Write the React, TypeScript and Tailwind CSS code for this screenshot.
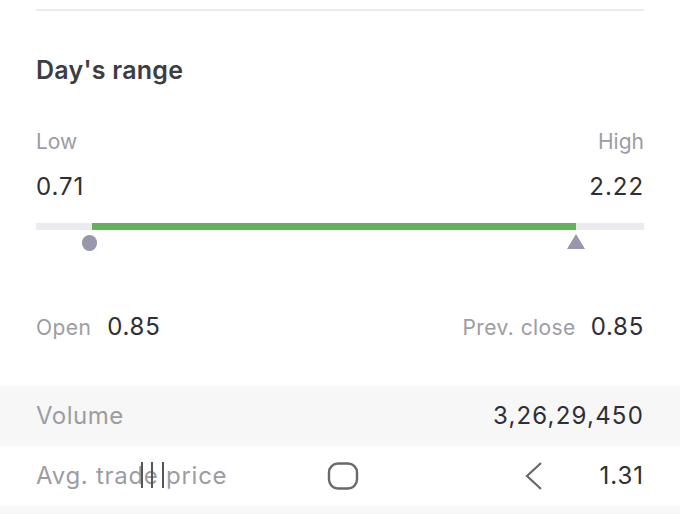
import React from "react";

export default function App() {
  const font = { fontFamily: "Inter, Roboto, 'Liberation Sans', sans-serif" };
  return (
    <div className="w-[680px] h-[514px] bg-white overflow-hidden relative" style={font}>
      <div className="px-[36px] pt-[9px]">
        <div className="h-[2px] bg-[#ececee]" />
      </div>
      <div className="px-[36px] pt-[44px]">
        <div className="text-[25px] leading-[30px] font-semibold text-[#3c3c44] tracking-[0.01em]">Day's range</div>
      </div>
      <div className="px-[36px] pt-[45px] flex justify-between text-[21px] leading-[24px] text-[#9c9ca4]">
        <span>Low</span>
        <span>High</span>
      </div>
      <div className="px-[36px] pt-[19px] flex justify-between text-[24px] leading-[28px] text-[#2e2e35] tracking-[0.04em]">
        <span>0.71</span>
        <span>2.22</span>
      </div>
      <div className="px-[36px] pt-[22px]">
        <div className="relative h-[7px] bg-[#ebebef]">
          <div className="absolute top-0 bottom-0 left-[56px] right-[68px] bg-[#63b25a]" />
          <div className="absolute top-[12px] left-[46px] w-[15px] h-[16px] rounded-full bg-[#9897ad]" />
          <svg className="absolute top-[11px] left-[531px]" width="18" height="15" viewBox="0 0 18 15">
            <polygon points="9,0 18,15 0,15" fill="#9897ad" />
          </svg>
        </div>
      </div>
      <div className="px-[36px] pt-[79px] flex justify-between items-baseline">
        <div className="flex items-baseline gap-[16px]">
          <span className="text-[21px] text-[#9c9ca4] tracking-[0.02em]">Open</span>
          <span className="text-[24px] text-[#2e2e35] tracking-[0.03em]">0.85</span>
        </div>
        <div className="flex items-baseline gap-[15px]">
          <span className="text-[21px] text-[#9c9ca4] tracking-[0.02em]">Prev. close</span>
          <span className="text-[24px] text-[#2e2e35] tracking-[0.03em]">0.85</span>
        </div>
      </div>
      <div className="mt-[41px] h-[60px] bg-[#f7f7f8] px-[36px] flex justify-between items-center">
        <span className="text-[24px] text-[#9c9ca4] tracking-[0.02em]">Volume</span>
        <span className="text-[24px] text-[#2e2e35] tracking-[0.05em]">3,26,29,450</span>
      </div>
      <div className="h-[60px] bg-white px-[36px] flex justify-between items-center relative">
        <span className="text-[24px] text-[#9c9ca4] tracking-[0.03em]">Avg. trade price</span>
        <span className="text-[24px] text-[#2e2e35] tracking-[0.04em]">1.31</span>
        <svg className="absolute left-[138px] top-[15px]" width="30" height="28" viewBox="0 0 30 28">
          <line x1="4" y1="1" x2="4" y2="27" stroke="#555" strokeWidth="2" />
          <line x1="14" y1="1" x2="14" y2="27" stroke="#555" strokeWidth="2" />
          <line x1="25" y1="1" x2="25" y2="27" stroke="#555" strokeWidth="2" />
        </svg>
        <svg className="absolute left-[327px] top-[16px]" width="32" height="28" viewBox="0 0 32 28">
          <rect x="2" y="1.5" width="28" height="25" rx="9" fill="none" stroke="#6a6a6a" strokeWidth="2.4" />
        </svg>
        <svg className="absolute left-[522px] top-[15px]" width="24" height="30" viewBox="0 0 24 30">
          <polyline points="19,2 5,15 19,28" fill="none" stroke="#666" strokeWidth="2.2" />
        </svg>
      </div>
      <div className="h-[20px] bg-[#f7f7f8]" />
    </div>
  );
}
